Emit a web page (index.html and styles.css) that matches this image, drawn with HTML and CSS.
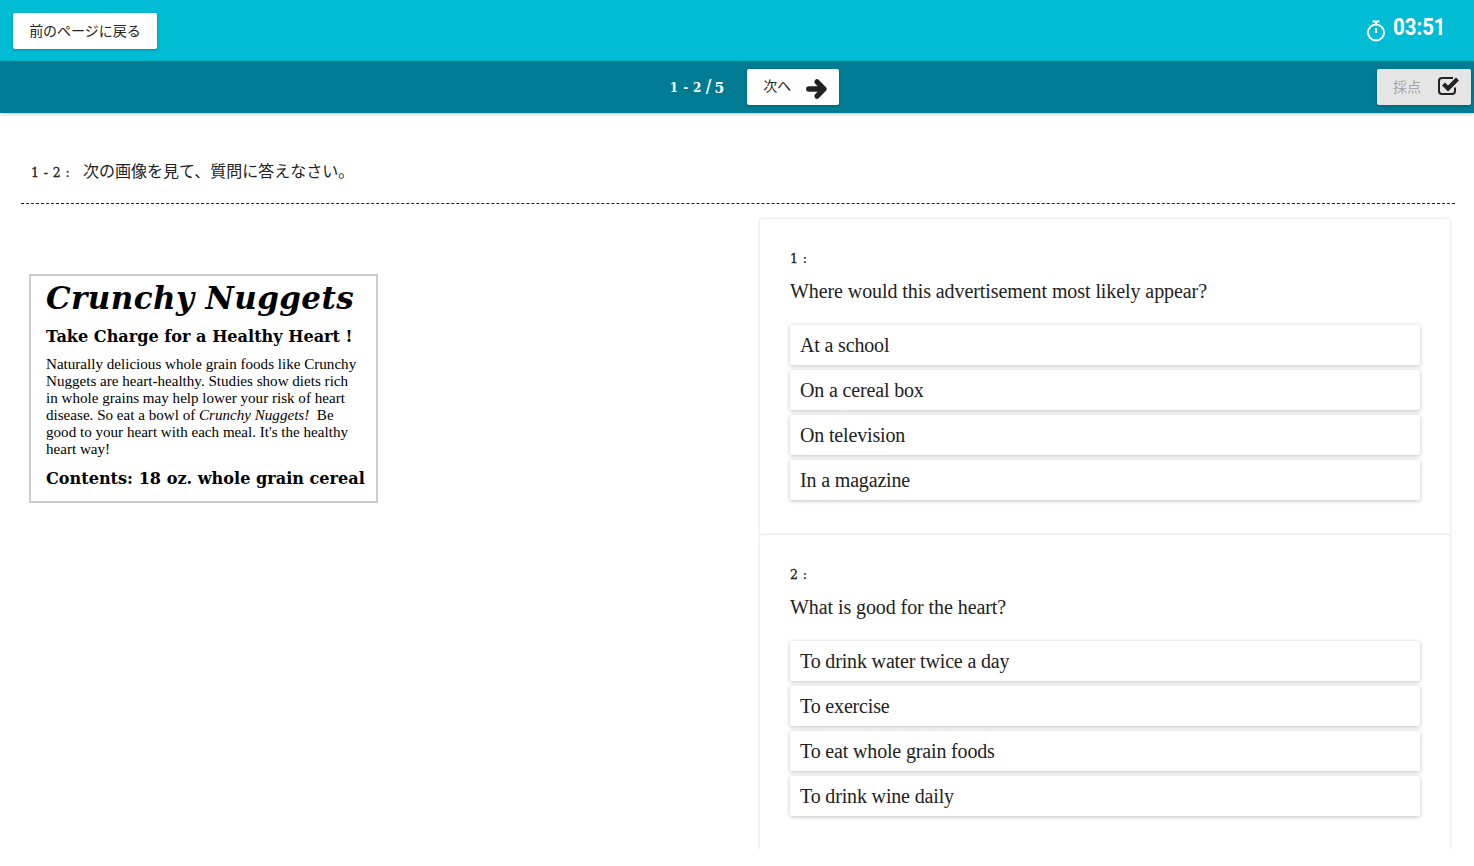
FILE: index.html
```html
<!DOCTYPE html>
<html lang="ja">
<head>
    <meta charset="UTF-8">
    <meta name="viewport" content="width=device-width, initial-scale=1.0">
    <title>Test</title>
    <link rel="stylesheet" href="styles.css">
</head>
<body>
    <div class="page">
        <header class="top-bar">
            <button class="btn back-btn">前のページに戻る</button>
            <div class="timer">
                <svg class="timer-icon" viewBox="0 0 20 22" width="20" height="22">
                    <path d="M6.5 1.5h7" fill="none" stroke="#fff" stroke-width="2"/>
                    <path d="M10 2v3" fill="none" stroke="#fff" stroke-width="2"/>
                    <circle cx="10" cy="12.5" r="8" fill="none" stroke="#fff" stroke-width="2"/>
                    <path d="M10 8v5" fill="none" stroke="#fff" stroke-width="2"/>
                </svg>
                <span class="timer-value">03:51</span>
            </div>
        </header>
        <nav class="sub-bar">
            <div class="pager">
                <span class="pager-count">1 - 2</span>
                <span class="pager-slash">/</span>
                <span class="pager-total">5</span>
                <button class="btn next-btn">
                    <span>次へ</span>
                    <svg viewBox="0 0 20 20" width="22" height="22">
                        <path d="M2.5 10h13M10 3.5l6.5 6.5-6.5 6.5" fill="none" stroke="#222" stroke-width="4.8" stroke-linecap="round" stroke-linejoin="round"/>
                    </svg>
                </button>
            </div>
            <button class="btn score-btn">
                <span>採点</span>
                <svg viewBox="0 0 22 20" width="22" height="20">
                    <path d="M17 11.5V15a3 3 0 0 1-3 3H4a3 3 0 0 1-3-3V5a3 3 0 0 1 3-3h11" fill="none" stroke="#222" stroke-width="2"/>
                    <path d="M5.5 8l4.5 4.5 9.5-9.5" fill="none" stroke="#222" stroke-width="4.2"/>
                </svg>
            </button>
        </nav>

        <section class="intro">
            <span class="intro-num">1 - 2 :</span>
            <span>次の画像を見て、質問に答えなさい。</span>
        </section>

        <main class="content">
            <div class="left-col">
                <div class="ad">
                    <h1 class="ad-title">Crunchy Nuggets</h1>
                    <h2 class="ad-sub">Take Charge for a Healthy Heart !</h2>
                    <p class="ad-text">Naturally delicious whole grain foods like Crunchy<br>Nuggets are heart-healthy. Studies show diets rich<br>in whole grains may help lower your risk of heart<br>disease. So eat a bowl of <i>Crunchy Nuggets!</i>&nbsp; Be<br>good to your heart with each meal. It's the healthy<br>heart way!</p>
                    <h2 class="ad-sub ad-contents">Contents: 18 oz. whole grain cereal</h2>
                </div>
            </div>
            <div class="right-col">
                <div class="question">
                    <div class="q-num">1 :</div>
                    <div class="q-text">Where would this advertisement most likely appear?</div>
                    <div class="choice">At a school</div>
                    <div class="choice">On a cereal box</div>
                    <div class="choice">On television</div>
                    <div class="choice">In a magazine</div>
                </div>
                <div class="question">
                    <div class="q-num">2 :</div>
                    <div class="q-text">What is good for the heart?</div>
                    <div class="choice">To drink water twice a day</div>
                    <div class="choice">To exercise</div>
                    <div class="choice">To eat whole grain foods</div>
                    <div class="choice">To drink wine daily</div>
                </div>
            </div>
        </main>
    </div>
</body>
</html>
```

FILE: styles.css
```css
html, body {
    margin: 0;
    padding: 0;
    background-color: #fff;
}
body {
    font-family: "Liberation Serif", "Noto Sans CJK JP", serif;
    color: #222;
    overflow: hidden;
}
.page {
    height: 849px;
    overflow: hidden;
}
.btn {
    background-color: #fff;
    border: none;
    border-radius: 2px;
    box-shadow: 0 1px 3px rgba(0,0,0,0.25);
    font-family: "Noto Sans CJK JP", sans-serif;
    font-size: 14px;
    color: #222;
    height: 36px;
    padding: 0 0 2px;
}
.top-bar {
    height: 61px;
    background-color: #00bcd4;
    display: flex;
    justify-content: space-between;
    align-items: center;
    padding: 0 29px 0 13px;
}
.back-btn {
    width: 144px;
}
.timer {
    display: flex;
    align-items: center;
    gap: 7px;
    color: #fff;
    font-family: Roboto, sans-serif;
    font-weight: 700;
    font-size: 24px;
}
.timer-value {
    display: block;
    width: 52px;
    margin-top: -8px;
    white-space: nowrap;
    transform: scaleX(0.85);
    transform-origin: left center;
}
.sub-bar {
    height: 52px;
    background-color: #007b94;
    box-shadow: 0 1px 3px rgba(0,0,0,0.25);
    display: flex;
    justify-content: center;
    align-items: center;
    position: relative;
}
.pager {
    display: flex;
    align-items: center;
    color: #fff;
    font-family: "DejaVu Serif", serif;
    font-weight: 700;
    margin-left: 35px;
}
.pager-count {
    font-size: 12px;
    letter-spacing: 0.4px;
    margin-top: 1px;
}
.pager-slash {
    font-family: "Liberation Sans", sans-serif;
    font-weight: 400;
    font-size: 20px;
    margin: 0 3px 0 4px;
}
.pager-total {
    font-size: 14px;
    margin: 1px 23px 0 0;
}
.next-btn {
    width: 92px;
    display: flex;
    align-items: center;
    justify-content: space-between;
    padding: 0 11px 0 16px;
}
.next-btn span {
    margin-top: -4px;
}
.next-btn svg {
    margin-top: 4px;
}
.score-btn {
    position: absolute;
    top: 8px;
    right: 3px;
    width: 94px;
    background-color: #e5e5e5;
    color: #a5a5a5;
    display: flex;
    align-items: center;
    justify-content: space-between;
    padding: 0 11px 2px 16px;
}
.intro {
    display: flex;
    align-items: baseline;
    margin: 45px 19px 0 21px;
    padding: 0 0 18px 10px;
    border-bottom: 1px dashed #222;
    font-family: "Noto Sans CJK JP", sans-serif;
    font-size: 16px;
    line-height: 24px;
}
.intro-num {
    font-family: "DejaVu Serif", serif;
    font-size: 12.5px;
    letter-spacing: 0.4px;
    margin-right: 13px;
    -webkit-text-stroke: 0.3px #222;
}
.content {
    display: flex;
    justify-content: space-between;
    padding: 15px 24px 0 29px;
}
.left-col {
    padding-top: 55px;
}
.ad {
    width: 330px;
    height: 225px;
    border: 2px solid #ccc;
    color: #000;
    padding: 0 0 0 15px;
}
.ad-title {
    margin: 1px 0 0;
    font-family: "DejaVu Serif", serif;
    font-style: italic;
    font-weight: 700;
    font-size: 31px;
    line-height: 42px;
    letter-spacing: 0.4px;
}
.ad-sub {
    margin: 6px 0 0;
    font-family: "DejaVu Serif", serif;
    font-weight: 700;
    font-size: 16.1px;
    line-height: 24px;
    white-space: nowrap;
}
.ad-text {
    margin: 7px 0 0;
    font-family: "Liberation Serif", serif;
    font-size: 15.1px;
    line-height: 17px;
    white-space: nowrap;
}
.ad-contents {
    margin-top: 9px;
}
.right-col {
    width: 690px;
}
.question {
    box-sizing: border-box;
    height: 316px;
    padding: 31px 30px 0;
    border-radius: 2px;
    box-shadow: 0 0 3px rgba(0,0,0,0.2);
    background-color: #fff;
}
.q-num {
    font-family: "DejaVu Serif", serif;
    font-size: 12.5px;
    letter-spacing: 0.4px;
    line-height: 18px;
    -webkit-text-stroke: 0.3px #222;
}
.q-text {
    font-size: 20px;
    line-height: 30px;
    letter-spacing: -0.08px;
    margin: 8px 0 19px;
}
.choice {
    height: 40px;
    line-height: 40px;
    padding-left: 10px;
    margin-bottom: 5px;
    font-size: 20px;
    letter-spacing: -0.16px;
    border-radius: 2px;
    background-color: #fff;
    box-shadow: 0 1px 4px rgba(0,0,0,0.25);
}
```
